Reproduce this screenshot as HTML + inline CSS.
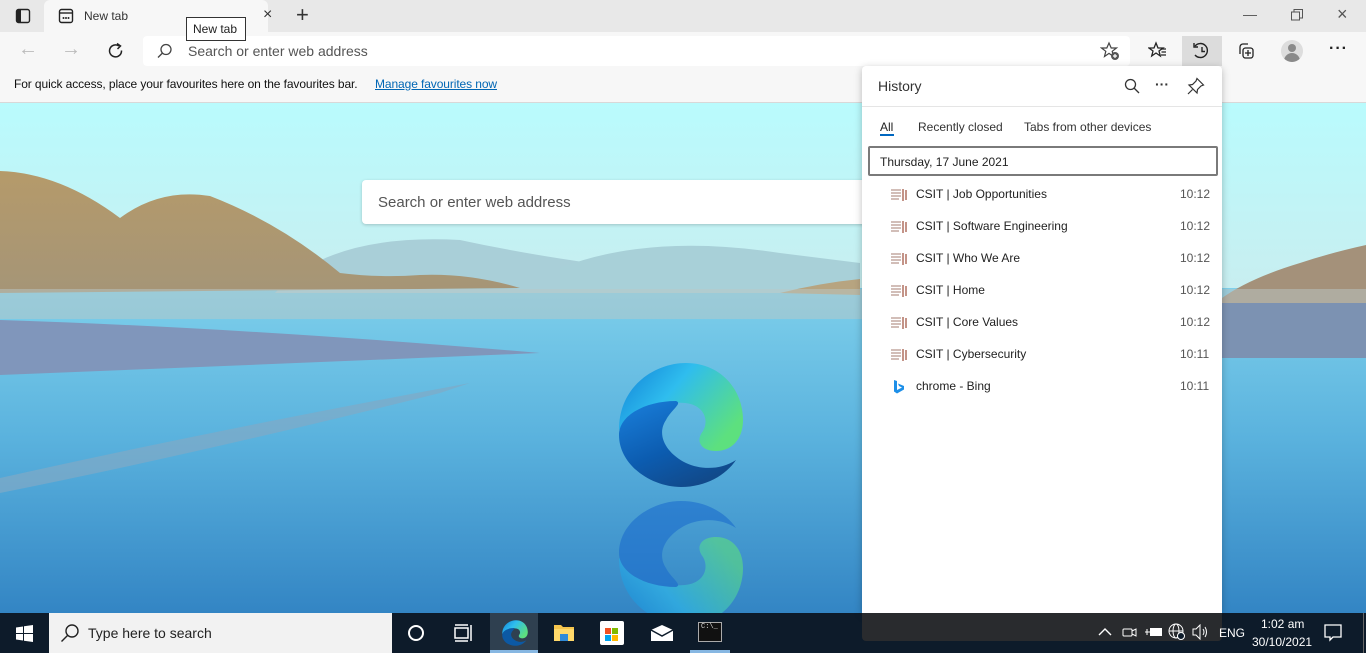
<!DOCTYPE html>
<html><head><meta charset="utf-8"><style>
*{margin:0;padding:0;box-sizing:border-box}
body{width:1366px;height:653px;overflow:hidden;position:relative;font-family:"Liberation Sans",sans-serif;background:#fff}
.abs{position:absolute}
.t{font-size:13px;color:#222}
</style></head><body>
<!-- title bar -->
<div class="abs" style="left:0;top:0;width:1366px;height:32px;background:#e8e8e8"></div>
<div class="abs" style="left:44px;top:0;width:224px;height:32px;background:#f7f7f7;border-radius:6px 6px 0 0"></div>
<svg class="abs" style="left:15px;top:8px" width="16" height="16"><rect x="1.5" y="1.5" width="13" height="13" rx="2" fill="none" stroke="#222" stroke-width="1.4"/><rect x="2" y="2" width="4" height="12" fill="#222"/></svg>
<svg class="abs" style="left:58px;top:8px" width="16" height="16"><rect x="1.5" y="1.5" width="13" height="13" rx="2" fill="none" stroke="#222" stroke-width="1.4"/><line x1="2" y1="5" x2="14" y2="5" stroke="#222" stroke-width="1.4"/><circle cx="5.5" cy="10" r="1" fill="#222"/><circle cx="8" cy="10" r="1" fill="#222"/><circle cx="10.5" cy="10" r="1" fill="#222"/></svg>
<div class="abs" style="left:84px;top:9px;font-size:12px;color:#333">New tab</div>
<div class="abs" style="left:263px;top:6px;font-size:16px;color:#333">×</div>
<div class="abs" style="left:296px;top:2px;font-size:22px;color:#333;font-weight:300">+</div>
<div class="abs" style="left:1243px;top:6px;font-size:14px;color:#555">—</div>
<svg class="abs" style="left:1291px;top:9px" width="12" height="12"><rect x="0.5" y="3" width="8" height="8" fill="none" stroke="#555"/><path d="M3 3V0.5H11.5V9H8.5" fill="none" stroke="#555"/></svg>
<div class="abs" style="left:1337px;top:4px;font-size:18px;color:#555">×</div>
<!-- toolbar -->
<div class="abs" style="left:0;top:32px;width:1366px;height:71px;background:#f7f7f7;border-bottom:1px solid #d8d8d8"></div>
<div class="abs" style="left:18px;top:38px;font-size:20px;color:#bbb">←</div>
<div class="abs" style="left:61px;top:38px;font-size:20px;color:#bbb">→</div>
<svg class="abs" style="left:107px;top:42px" width="18" height="18"><path d="M14.5 8.5A6 6 0 1 1 12 4" fill="none" stroke="#222" stroke-width="1.5"/><path d="M10 1.5L13.5 4L10.5 7" fill="none" stroke="#222" stroke-width="1.5"/></svg>
<div class="abs" style="left:143px;top:36px;width:987px;height:30px;background:#fff;border-radius:4px"></div>
<svg class="abs" style="left:157px;top:43px" width="16" height="16"><circle cx="9" cy="6.5" r="5" fill="none" stroke="#444" stroke-width="1.3"/><line x1="5.5" y1="10" x2="1" y2="14.5" stroke="#444" stroke-width="1.3"/></svg>
<div class="abs" style="left:188px;top:43px;font-size:14px;color:#555">Search or enter web address</div>
<svg class="abs" style="left:1100px;top:41px" width="20" height="20"><path d="M9 2L11.2 7H16.5L12.2 10.3L13.5 15.5L9 12.4L4.5 15.5L5.8 10.3L1.5 7H6.8Z" fill="none" stroke="#444" stroke-width="1.2"/><circle cx="15" cy="15" r="4" fill="#555"/><path d="M15 13v4M13 15h4" stroke="#fff" stroke-width="1.2"/></svg>
<svg class="abs" style="left:1148px;top:41px" width="20" height="20"><path d="M8 2L10 7H15L11 10L12.3 15L8 12L3.7 15L5 10L1 7H6Z" fill="none" stroke="#222" stroke-width="1.3"/><path d="M13 8h5M13.5 11h4.5M13 14h5" stroke="#222" stroke-width="1.2"/></svg>
<div class="abs" style="left:1182px;top:36px;width:40px;height:30px;background:#dcdcdc"></div>
<svg class="abs" style="left:1192px;top:41px" width="20" height="20"><path d="M3 5A7 7 0 1 1 3 14" fill="none" stroke="#222" stroke-width="1.4"/><path d="M2 2V6H6" fill="none" stroke="#222" stroke-width="1.4"/><path d="M10 6V10.5H13" fill="none" stroke="#222" stroke-width="1.4"/></svg>
<svg class="abs" style="left:1236px;top:41px" width="20" height="20"><path d="M4 13V6a3 3 0 0 1 3-3h5" fill="none" stroke="#222" stroke-width="1.3"/><rect x="7" y="7" width="10" height="10" rx="2.5" fill="none" stroke="#222" stroke-width="1.3"/><path d="M12 9v6M9 12h6" stroke="#222" stroke-width="1.3"/></svg>
<div class="abs" style="left:1281px;top:40px;width:22px;height:22px;border-radius:50%;background:#ddd;overflow:hidden"><div class="abs" style="left:7px;top:4px;width:8px;height:8px;border-radius:50%;background:#8a8a8a"></div><div class="abs" style="left:3px;top:13px;width:16px;height:12px;border-radius:8px 8px 0 0;background:#8a8a8a"></div></div>
<div class="abs" style="left:1329px;top:40px;font-size:16px;color:#222;letter-spacing:1px;font-weight:bold">···</div>
<div class="abs" style="left:14px;top:77px;font-size:12px;color:#111;letter-spacing:-0.1px">For quick access, place your favourites here on the favourites bar.</div>
<div class="abs" style="left:375px;top:77px;font-size:12px;color:#0066b4;text-decoration:underline;letter-spacing:-0.1px">Manage favourites now</div>
<div class="abs" style="left:186px;top:17px;width:60px;height:24px;border:1px solid #333;background:#fff;font-size:12px;color:#222;padding:4px 0 0 6px">New tab</div>
<!-- background -->
<svg class="abs" style="left:0;top:103px" width="1366" height="510" viewBox="0 0 1366 510">
<defs>
<linearGradient id="sky" x1="0" y1="0" x2="0" y2="1"><stop offset="0" stop-color="#b9fbfd"/><stop offset="1" stop-color="#c8eef0"/></linearGradient>
<linearGradient id="wat" x1="0" y1="0" x2="0" y2="1"><stop offset="0" stop-color="#a8e6ef"/><stop offset="0.3" stop-color="#86d6ee"/><stop offset="0.65" stop-color="#5bb3de"/><stop offset="1" stop-color="#3385c4"/></linearGradient>
<linearGradient id="hill" x1="0" y1="0" x2="0" y2="1"><stop offset="0" stop-color="#b59a6a"/><stop offset="1" stop-color="#a59577"/></linearGradient>
<linearGradient id="eg1" x1="0" y1="0" x2="1" y2="0.6"><stop offset="0" stop-color="#0f7fd6"/><stop offset="0.45" stop-color="#2fbdee"/><stop offset="1" stop-color="#5de07e"/></linearGradient>
<linearGradient id="eg2" x1="0" y1="0" x2="0.6" y2="1"><stop offset="0" stop-color="#1a80dc"/><stop offset="0.6" stop-color="#0c5cb0"/><stop offset="1" stop-color="#114a8b"/></linearGradient>
</defs>
<rect width="1366" height="510" fill="url(#wat)"/>
<rect width="1366" height="185" fill="url(#sky)"/>
<path d="M275 190Q330 130 460 137Q520 150 590 160L760 168L800 190Z" fill="#a9cfd8"/>
<path d="M560 165Q650 130 780 150L860 160L860 190L560 190Z" fill="#a8d0d8"/>
<path d="M0 68Q60 70 120 115Q160 85 210 93Q280 120 340 170Q380 175 420 172Q470 170 520 185L0 190Z" fill="url(#hill)"/>
<path d="M1222 195Q1250 175 1300 160Q1330 150 1366 142V200H1222Z" fill="#a4917a"/>
<path d="M780 190Q820 180 860 176V192Z" fill="#b7a480"/>
<rect y="186" width="1366" height="30" fill="#b9c8c6" opacity="0.5"/>
<path d="M0 217Q250 225 540 250Q300 260 0 272Z" fill="#8096bb"/>
<rect x="1222" y="200" width="144" height="55" fill="#7c92b2"/>
<path d="M0 375Q200 330 470 280L440 290Q200 350 0 390Z" fill="#80a9c6" opacity="0.7"/>
<g id="edge" transform="translate(681 322)">
<path d="M-62 5C-62 -40 -25 -62 5 -62C40 -62 62 -35 62 -5C62 15 50 26 35 26C20 26 14 16 22 6C28 -4 24 -20 4 -22C-25 -25 -45 -10 -62 5Z" fill="url(#eg1)"/>
<path d="M-5 -24C-35 -24 -62 -10 -62 10C-62 40 -30 62 0 62C25 62 45 50 55 35C40 45 20 45 5 38C-15 28 -25 10 -15 -5C-10 -15 2 -22 -5 -24Z" fill="url(#eg2)"/>
</g>
<g transform="translate(681 460) scale(1 -1)" opacity="0.6">
<path d="M-62 5C-62 -40 -25 -62 5 -62C40 -62 62 -35 62 -5C62 15 50 26 35 26C20 26 14 16 22 6C28 -4 24 -20 4 -22C-25 -25 -45 -10 -62 5Z" fill="url(#eg1)"/>
<path d="M-5 -24C-35 -24 -62 -10 -62 10C-62 40 -30 62 0 62C25 62 45 50 55 35C40 45 20 45 5 38C-15 28 -25 10 -15 -5C-10 -15 2 -22 -5 -24Z" fill="#1b6ccd"/>
</g>
</svg>
<div class="abs" style="left:362px;top:180px;width:520px;height:44px;background:#fff;border-radius:4px;box-shadow:0 1px 3px rgba(0,0,0,.2)"></div>
<div class="abs" style="left:378px;top:194px;font-size:15px;color:#555">Search or enter web address</div>
<!-- taskbar -->
<div class="abs" style="left:0;top:613px;width:1366px;height:40px;background:#0d1b2a"></div>
<svg class="abs" style="left:16px;top:625px" width="17" height="17"><path d="M0 2.5L7 1.5V8H0ZM8 1.3L17 0V8H8ZM0 9H7V15.5L0 14.5ZM8 9H17V17L8 15.7Z" fill="#fff"/></svg>
<div class="abs" style="left:49px;top:613px;width:343px;height:40px;background:#f2f2f2"></div>
<svg class="abs" style="left:60px;top:623px" width="20" height="20"><circle cx="12" cy="8" r="6" fill="none" stroke="#222" stroke-width="1.4"/><line x1="7.5" y1="12.5" x2="1.5" y2="18.5" stroke="#222" stroke-width="1.4"/></svg>
<div class="abs" style="left:88px;top:625px;font-size:14px;color:#222">Type here to search</div>
<div class="abs" style="left:408px;top:625px;width:16px;height:16px;border:2px solid #fff;border-radius:50%"></div>
<svg class="abs" style="left:454px;top:624px" width="20" height="18"><rect x="1" y="4" width="13" height="10" fill="none" stroke="#fff" stroke-width="1.5"/><path d="M1 1h13M1 17h13M17 1v16" stroke="#fff" stroke-width="1.5"/></svg>
<div class="abs" style="left:490px;top:613px;width:48px;height:40px;background:#2f4050"></div>
<div class="abs" style="left:490px;top:650px;width:48px;height:3px;background:#87b7e2"></div>
<svg class="abs" style="left:502px;top:620px" width="26" height="26" viewBox="-63 -63 126 126">
<path d="M-62 5C-62 -40 -25 -62 5 -62C40 -62 62 -35 62 -5C62 15 50 26 35 26C20 26 14 16 22 6C28 -4 24 -20 4 -22C-25 -25 -45 -10 -62 5Z" fill="url(#eg1)"/>
<path d="M-5 -24C-35 -24 -62 -10 -62 10C-62 40 -30 62 0 62C25 62 45 50 55 35C40 45 20 45 5 38C-15 28 -25 10 -15 -5C-10 -15 2 -22 -5 -24Z" fill="#0c59a4"/></svg>
<svg class="abs" style="left:553px;top:622px" width="22" height="22"><path d="M1 3H8L10 5H21V19H1Z" fill="#f5c54d"/><rect x="1" y="7" width="20" height="12" fill="#ffd96a"/><rect x="7" y="12" width="8" height="7" fill="#2f8ad8"/></svg>
<div class="abs" style="left:600px;top:621px;width:24px;height:24px;background:#fff;border-radius:2px"></div>
<svg class="abs" style="left:604px;top:627px" width="16" height="16"><rect x="1" y="1" width="6" height="6" fill="#f25022"/><rect x="8" y="1" width="6" height="6" fill="#7fba00"/><rect x="1" y="8" width="6" height="6" fill="#00a4ef"/><rect x="8" y="8" width="6" height="6" fill="#ffb900"/></svg>
<svg class="abs" style="left:650px;top:624px" width="24" height="18"><path d="M1 6L12 1L23 6V17H1Z" fill="#fff"/><path d="M1 6L12 12L23 6" fill="none" stroke="#0d1b2a" stroke-width="1.5"/></svg>
<div class="abs" style="left:698px;top:622px;width:24px;height:20px;background:#111;border:1px solid #aaa"></div>
<div class="abs" style="left:701px;top:623px;font-size:7px;color:#ddd;font-family:'Liberation Mono',monospace">C:\_</div>
<div class="abs" style="left:690px;top:650px;width:40px;height:3px;background:#87b7e2"></div>
<!-- history panel -->
<div class="abs" style="left:862px;top:66px;width:360px;height:547px;background:#fff;box-shadow:0 2px 8px rgba(0,0,0,.25);border-radius:4px 4px 0 0"></div>
<div class="abs" style="left:862px;top:613px;width:360px;height:28px;background:#292b2e;border-radius:0 0 4px 4px"></div>
<div class="abs" style="left:878px;top:78px;font-size:14px;color:#333">History</div>
<svg class="abs" style="left:1124px;top:78px" width="16" height="16"><circle cx="6.5" cy="6.5" r="5" fill="none" stroke="#333" stroke-width="1.3"/><line x1="10" y1="10" x2="15" y2="15" stroke="#333" stroke-width="1.3"/></svg>
<div class="abs" style="left:1155px;top:76px;font-size:14px;color:#333;font-weight:bold">···</div>
<svg class="abs" style="left:1187px;top:77px" width="18" height="18"><path d="M10 1.5L16.5 8L14 9L10.5 12.5L10 16L2 8L5.5 7.5L9 4Z" fill="none" stroke="#333" stroke-width="1.2"/><line x1="5.5" y1="12.5" x2="1" y2="17" stroke="#333" stroke-width="1.2"/></svg>
<div class="abs" style="left:862px;top:106px;width:360px;height:1px;background:#e5e5e5"></div>
<div class="abs" style="left:880px;top:120px;font-size:12px;color:#222">All</div>
<div class="abs" style="left:880px;top:134px;width:14px;height:2px;background:#0067c0"></div>
<div class="abs" style="left:918px;top:120px;font-size:12px;color:#333">Recently closed</div>
<div class="abs" style="left:1024px;top:120px;font-size:12px;color:#333">Tabs from other devices</div>
<div class="abs" style="left:868px;top:146px;width:350px;height:30px;border:2px solid #7a7a7a;border-radius:2px"></div>
<div class="abs" style="left:880px;top:155px;font-size:12px;color:#222">Thursday, 17 June 2021</div>
<div id="items"></div>
<!-- tray -->
<svg class="abs" style="left:1098px;top:627px" width="14" height="10"><path d="M1 8L7 2L13 8" fill="none" stroke="#fff" stroke-width="1.4"/></svg>
<svg class="abs" style="left:1122px;top:624px" width="16" height="16"><rect x="1" y="5" width="9" height="7" rx="1" fill="none" stroke="#fff"/><path d="M10 7L14 5V12L10 10" fill="none" stroke="#fff"/></svg>
<svg class="abs" style="left:1145px;top:626px" width="18" height="12"><rect x="5" y="2" width="12" height="8" fill="#fff"/><path d="M0 6H5M2 3V9" stroke="#fff"/></svg>
<svg class="abs" style="left:1168px;top:623px" width="18" height="18"><circle cx="8" cy="8" r="7" fill="none" stroke="#fff"/><ellipse cx="8" cy="8" rx="3" ry="7" fill="none" stroke="#fff"/><path d="M1 8H15" stroke="#fff"/><circle cx="13" cy="13" r="3.5" fill="#0d1b2a" stroke="#fff"/></svg>
<svg class="abs" style="left:1192px;top:624px" width="18" height="16"><path d="M1 5H4L8 1V15L4 11H1Z" fill="none" stroke="#fff"/><path d="M11 5Q13 8 11 11M13 3Q16 8 13 13" fill="none" stroke="#fff"/></svg>
<div class="abs" style="left:1219px;top:626px;font-size:12px;color:#fff">ENG</div>
<div class="abs" style="left:1261px;top:617px;font-size:12px;color:#fff">1:02 am</div>
<div class="abs" style="left:1252px;top:635px;font-size:12px;color:#fff">30/10/2021</div>
<svg class="abs" style="left:1324px;top:624px" width="18" height="18"><path d="M1 1H17V13H9L6 16V13H1Z" fill="none" stroke="#fff" stroke-width="1.3"/></svg>
<div class="abs" style="left:1363px;top:613px;width:1px;height:40px;background:#666"></div>
<script>
var d=[["CSIT | Job Opportunities","10:12"],["CSIT | Software Engineering","10:12"],["CSIT | Who We Are","10:12"],["CSIT | Home","10:12"],["CSIT | Core Values","10:12"],["CSIT | Cybersecurity","10:11"],["chrome - Bing","10:11"]];
var h="";d.forEach(function(r,i){var y=187+i*32;
var ic=i<6?'<svg class="abs" style="left:890px;top:'+(y+1)+'px" width="18" height="14"><path d="M1 2h10M1 5h10M1 8h10M1 11h8" stroke="#c4a8a0" stroke-width="1.6"/><path d="M13 1v12M16 2v10" stroke="#b07060" stroke-width="1.5"/></svg>':'<svg class="abs" style="left:892px;top:'+y+'px" width="14" height="16"><path d="M2 1L5 2V11L10 8.5L7 7L6 4.5L12 7V10.5L5 14.5L2 12.5Z" fill="#1d8fe8"/></svg>';
h+=ic+'<div class="abs" style="left:916px;top:'+y+'px;font-size:12px;color:#222">'+r[0]+'</div><div class="abs" style="left:1180px;top:'+y+'px;font-size:12px;color:#555">'+r[1]+'</div>';});
document.getElementById("items").innerHTML=h;
</script>
</body></html>
